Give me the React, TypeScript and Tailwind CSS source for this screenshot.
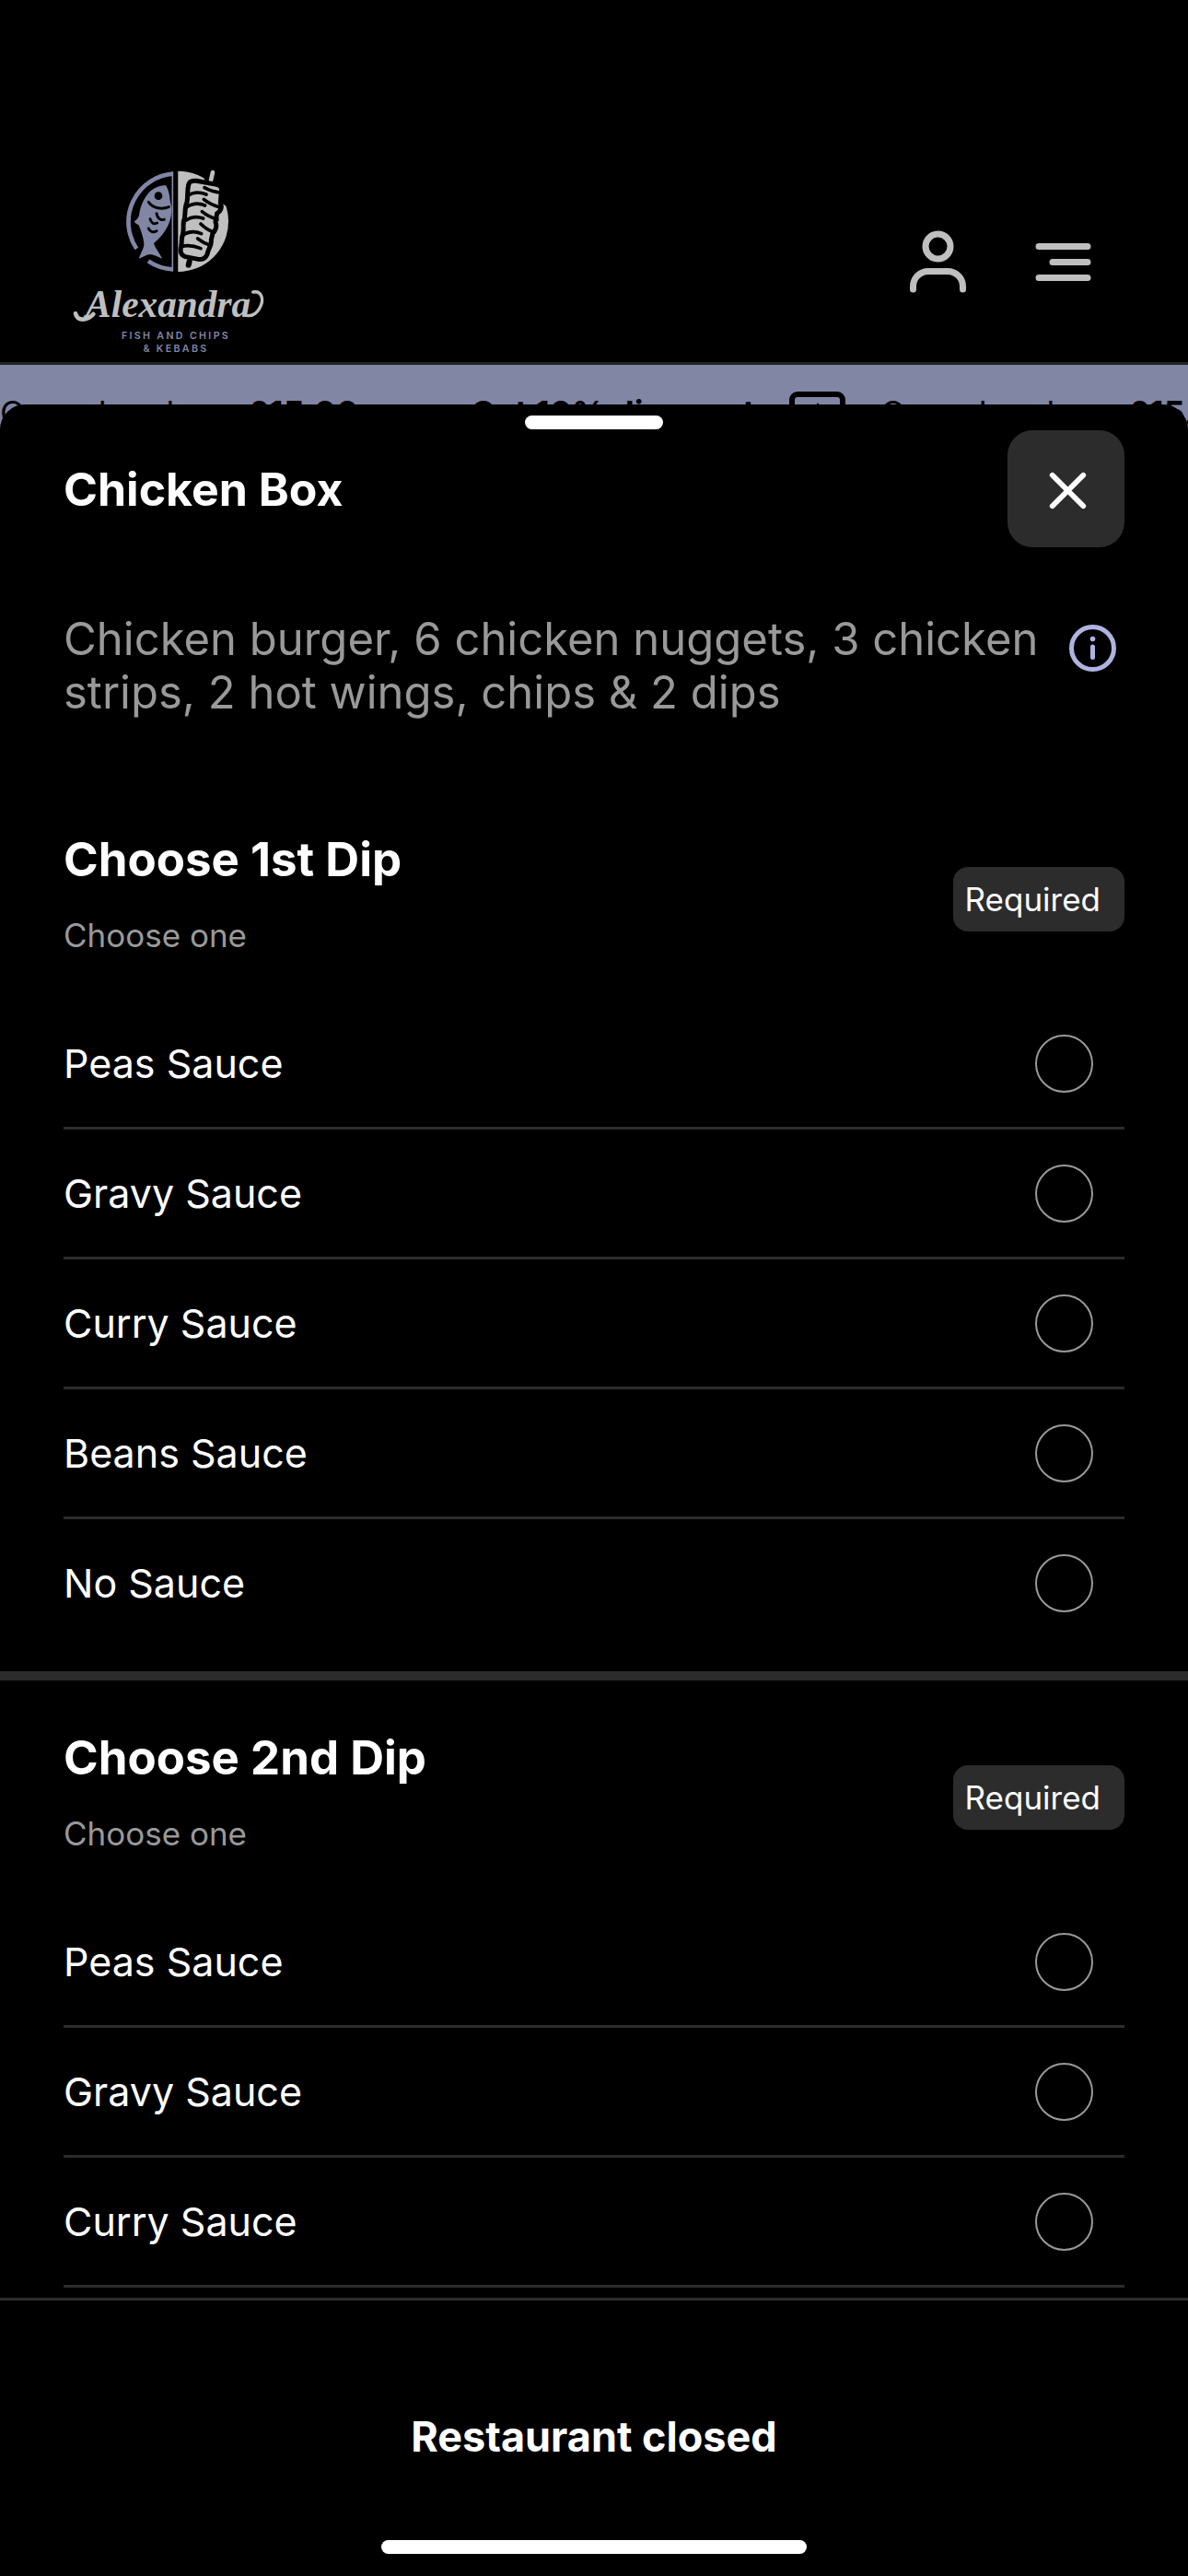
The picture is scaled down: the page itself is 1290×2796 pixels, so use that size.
import { X } from 'lucide-react';

type DipGroup = {
    id: string;
    title: string;
    options: string[];
};

const SAUCES = ['Peas Sauce', 'Gravy Sauce', 'Curry Sauce', 'Beans Sauce', 'No Sauce'];

const GROUPS: DipGroup[] = [
    { id: 'dip-1', title: 'Choose 1st Dip', options: SAUCES },
    { id: 'dip-2', title: 'Choose 2nd Dip', options: SAUCES },
];

function Logo() {
    return (
        <svg viewBox="54 35 630 612" className="h-[204px] w-[210px]" role="img" aria-label="Alexandra Fish and Chips & Kebabs">
            {/* plate rim, broken where the tail crosses it */}
            <g fill="none" stroke="#8286a5">
                <path d="M384 55A157 157 0 0 0 265 299" strokeWidth="14" />
                <path d="M303 339A157 157 0 0 0 384 366" strokeWidth="14" />
                <path d="M382 48V372" strokeWidth="5" />
            </g>
            <path
                d="M360 92C368 105 373 122 374 142L379 166C381 205 363 247 321 281C326 299 340 312 348 331C334 326 322 318 311 317C297 317 288 326 272 331C278 313 290 296 289 282C286 256 277 236 272 222C266 220 260 216 257 210C264 205 270 200 273 190C277 158 292 128 311 110C326 98 344 93 360 92Z"
                fill="#8286a5"
            />
            <circle cx="336" cy="127" r="13" />
            <g fill="none" stroke="#000" strokeWidth="9" strokeLinecap="round">
                <path d="M304 147C319 168 348 172 370 163" />
                <path d="M330 184C333 200 342 207 355 204" />
                <path d="M309 202C313 216 321 220 332 215" />
                <path d="M304 233C309 245 320 247 330 241" />
            </g>

            <path d="M400 46A164 164 0 0 1 400 374Z" fill="#bfbfbf" />
            <path d="M480 62L560 92L556 160L520 130Z" />
            <path d="M513 50L507 76" stroke="#bfbfbf" strokeWidth="14" strokeLinecap="round" />
            <path
                d="M434 92C435 80 446 76 460 78L526 90C540 93 544 102 541 114L538 150C545 164 538 178 527 184L522 212C528 226 522 240 513 248L508 270C510 286 502 296 498 306C494 328 482 336 466 333L424 325C408 320 406 306 410 292C414 270 410 264 416 250C420 226 414 214 421 200C425 170 422 160 429 148C433 124 429 110 434 92Z"
                fill="#bfbfbf"
                stroke="#000"
                strokeWidth="15"
            />
            {/* meat folds, alternating from the left and right edge */}
            <g fill="none" stroke="#000" strokeWidth="11" strokeLinecap="round" strokeLinejoin="round">
                <path d="M432 126C452 112 472 114 492 122M540 116C516 114 500 108 486 100" />
                <path d="M424 166C446 150 470 150 488 158M536 164C510 156 496 148 484 138" />
                <path d="M420 210C444 192 466 194 482 200M528 204C504 196 490 188 478 178" />
                <path d="M414 256C436 240 458 242 476 250M518 246C496 238 484 228 474 218" />
                <path d="M410 292C430 286 454 290 474 298M506 288C486 282 474 274 464 266" />
            </g>
            <path d="M437 340L434 352" stroke="#000" strokeWidth="18" strokeLinecap="round" />

            <text
                x="368"
                y="522"
                textAnchor="middle"
                fontFamily="'Liberation Serif', serif"
                fontSize="124"
                fontStyle="italic"
                fontWeight="700"
                fill="#bfbfbf"
            >
                Alexandra
            </text>
            <g fill="none" stroke="#bfbfbf" strokeLinecap="round">
                <path d="M66 510C72 536 104 534 124 512" strokeWidth="14" />
                <path d="M644 440C672 434 682 464 666 492C656 510 642 518 626 517" strokeWidth="10" />
            </g>
            <g
                fontFamily="Inter, 'Liberation Sans', sans-serif"
                fontSize="32"
                fontWeight="600"
                letterSpacing="7"
                fill="#8286a5"
                textAnchor="middle"
            >
                <text x="393" y="594">FISH AND CHIPS</text>
                <text x="393" y="634">&amp; KEBABS</text>
            </g>
        </svg>
    );
}

function SiteHeader() {
    return (
        <header className="flex shrink-0 items-center justify-between border-b-[3px] border-[#232323] pt-[182px] pr-[105px] pb-[7px] pl-[78px]">
            <a href="#home">
                <Logo />
            </a>
            <div className="flex items-center gap-[75px]">
                <button type="button" aria-label="Account">
                    <svg viewBox="0 0 61 68" className="h-[68px] w-[61px]" fill="none" stroke="#bfbfbf" strokeWidth="7" strokeLinecap="round">
                        <circle cx="30.5" cy="17.5" r="13.5" />
                        <path d="M3.5 64V61A16.5 16.5 0 0 1 20 44.5H41A16.5 16.5 0 0 1 57.5 61V64" />
                    </svg>
                </button>
                <button type="button" aria-label="Menu">
                    <svg viewBox="0 0 61 41" className="h-[41px] w-[61px]" stroke="#bfbfbf" strokeWidth="7" strokeLinecap="round">
                        <path d="M4 3.5H57M19 20.5H57M4 37.5H57" />
                    </svg>
                </button>
            </div>
        </header>
    );
}

function OfferItem() {
    return (
        <div className="flex w-[956px] shrink-0 items-start whitespace-nowrap">
            <span className="w-[269px]">On order above</span>
            <strong className="w-[242px]">£15.00</strong>
            <strong className="w-[346px]">Get 10% discount</strong>
            <svg viewBox="0 0 61 61" className="size-[61px]" fill="none" stroke="#000" strokeWidth="6">
                <rect x="3" y="3" width="55" height="55" rx="6" />
                <path d="M31 15V46M20 30L31 17L42 30" />
            </svg>
        </div>
    );
}

function OfferBanner() {
    return (
        <div className="flex h-[116px] shrink-0 overflow-hidden bg-[#8286a5] pt-[29px] text-[36px] leading-[46px] text-black">
            <OfferItem />
            <OfferItem />
        </div>
    );
}

function InfoIcon() {
    return (
        <svg viewBox="0 0 51 51" className="size-[51px]" fill="none" stroke="#b0b2e0" strokeWidth="5" strokeLinecap="round">
            <circle cx="25.5" cy="25.5" r="23" />
            <path d="M25.5 24V35.5" />
            <circle cx="25.5" cy="15.5" r="2.8" fill="#b0b2e0" stroke="none" />
        </svg>
    );
}

function OptionGroup({ group }: { group: DipGroup }) {
    return (
        <section className="border-b-[10px] border-[#2c2c2c] px-[69px] pt-[54px] pb-[27px]">
            <header className="flex items-center justify-between pb-[46px]">
                <div>
                    <h2 className="text-[51px] leading-[60px] font-bold">{group.title}</h2>
                    <p className="mt-[28px] text-[35px] leading-[48px] text-[#999999]">Choose one</p>
                </div>
                <span className="mt-[10px] rounded-2xl bg-[#2c2c2c] py-[11px] pr-[26px] pl-[13px] text-[35px] leading-[48px]">
                    Required
                </span>
            </header>
            <ul>
                {group.options.map((option) => (
                    <li key={option} className="border-b-[3px] border-[#2c2c2c] last:border-b-0">
                        <label className="flex h-[138px] items-center justify-between pr-[34px] text-[43px]">
                            {option}
                            <input
                                type="radio"
                                name={group.id}
                                value={option}
                                className="size-[63px] appearance-none rounded-full border-2 border-[#999999] checked:bg-white"
                            />
                        </label>
                    </li>
                ))}
            </ul>
        </section>
    );
}

export default function App() {
    return (
        <div className="flex h-screen flex-col overflow-hidden bg-black font-['Inter','Liberation_Sans',sans-serif] text-white">
            <SiteHeader />
            <OfferBanner />

            <main className="relative -mt-[73px] flex min-h-0 flex-1 flex-col rounded-t-[27px] bg-black">
                <div className="mx-auto mt-3 h-[15px] w-[150px] shrink-0 rounded-full bg-white" />

                <div className="flex shrink-0 items-center justify-between px-[69px] pt-px">
                    <h1 className="text-[50px] leading-[60px] font-bold">Chicken Box</h1>
                    <button
                        type="button"
                        aria-label="Close"
                        className="flex size-[127px] items-center justify-center rounded-[27px] bg-[#2c2c2c] pt-1 pl-1"
                    >
                        <X size={67} strokeWidth={2.1} />
                    </button>
                </div>

                <div className="min-h-0 flex-1 overflow-hidden">
                    <div className="flex items-start justify-between pt-[71px] pr-[78px] pb-[68px] pl-[69px]">
                        <p className="text-[49px] leading-[58px] text-[#999999]">
                            Chicken burger, 6 chicken nuggets, 3 chicken strips, 2 hot wings, chips &amp; 2 dips
                        </p>
                        <button type="button" aria-label="Allergen information" className="mt-[13px] shrink-0">
                            <InfoIcon />
                        </button>
                    </div>

                    {GROUPS.map((group) => (
                        <OptionGroup key={group.id} group={group} />
                    ))}
                </div>

                <footer className="flex shrink-0 flex-col items-center border-t-[3px] border-[#2c2c2c] pt-[118px] pb-6">
                    <p className="text-[45px] leading-[60px] font-bold">Restaurant closed</p>
                    <div className="mt-[82px] h-[15px] w-[462px] rounded-full bg-white" />
                </footer>
            </main>
        </div>
    );
}
